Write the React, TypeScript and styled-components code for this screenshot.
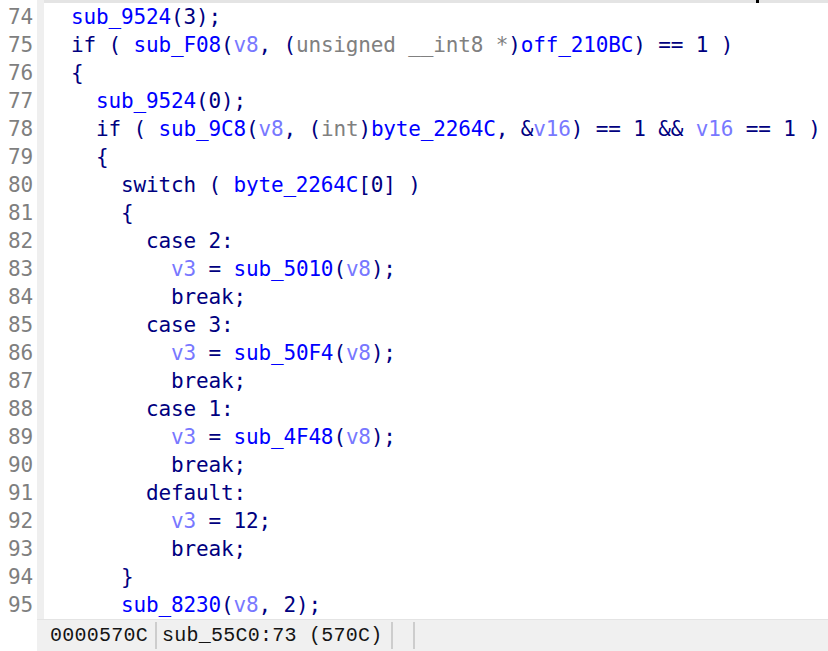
import React from "react";
import styled, { createGlobalStyle } from "styled-components";

const Global = createGlobalStyle`
  html, body { margin: 0; padding: 0; background: #ffffff; }
  body { width: 828px; height: 651px; overflow: hidden; }
`;

type Kind = "p" | "f" | "v" | "t";
type Tok = [Kind, string];

const Page = styled.div`
  width: 828px;
  height: 651px;
  display: flex;
  flex-direction: column;
  background: #ffffff;
  overflow: hidden;
`;

const Editor = styled.div`
  flex: 1;
  display: flex;
  min-height: 0;
`;

const Gutter = styled.div`
  width: 37px;
  padding-top: 3px;
  display: flex;
  flex-direction: column;
  align-items: flex-end;
  box-sizing: border-box;
  padding-right: 4px;
`;

const LineNo = styled.div`
  height: 28px;
  line-height: 28px;
  font-family: "DejaVu Sans Mono", monospace;
  font-size: 21px;
  letter-spacing: -0.15px;
  color: #7f7f7f;
`;

const Strip = styled.div`
  width: 7px;
  background: #efefef;
`;

const CodePane = styled.div`
  flex: 1;
  display: flex;
  flex-direction: column;
  padding-left: 2px;
  position: relative;
`;

const TopBar = styled.div`
  height: 3px;
  margin-left: -2px;
  background: #e4e4e4;
  position: relative;
`;

const Thumb = styled.div`
  position: absolute;
  left: 712px;
  top: 0;
  width: 3px;
  height: 3px;
  background: #000000;
`;

const CodeLine = styled.div`
  height: 28px;
  line-height: 28px;
  font-family: "DejaVu Sans Mono", monospace;
  font-size: 21px;
  letter-spacing: -0.15px;
  white-space: pre;
  color: #000080;
`;

const colors: Record<Kind, string> = {
  p: "#000080",
  f: "#0000ff",
  v: "#7878ff",
  t: "#808080",
};

const Token = styled.span<{ $kind: Kind }>`
  color: ${(p) => colors[p.$kind]};
`;

const StatusBar = styled.div`
  height: 32px;
  margin-left: 37px;
  background: #f0f0f0;
  border-top: 1px solid #e4e4e4;
  box-sizing: border-box;
  display: flex;
  align-items: stretch;
`;

const Cell = styled.div<{ $w: number; $pad: number }>`
  width: ${(p) => p.$w}px;
  padding-left: ${(p) => p.$pad}px;
  box-sizing: border-box;
  margin: 2px 0 2px;
  border-right: 2px solid #cdcdcd;
  display: flex;
  align-items: center;
  font-family: "Liberation Mono", "Courier New", monospace;
  font-size: 20px;
  letter-spacing: 0.25px;
  color: #141414;
  white-space: pre;
`;

const lines: { n: number; t: Tok[] }[] = [
  { n: 74, t: [["p", "  "], ["f", "sub_9524"], ["p", "(3);"]] },
  {
    n: 75,
    t: [
      ["p", "  if ( "],
      ["f", "sub_F08"],
      ["p", "("],
      ["v", "v8"],
      ["p", ", ("],
      ["t", "unsigned __int8 *"],
      ["p", ")"],
      ["f", "off_210BC"],
      ["p", ") == 1 )"],
    ],
  },
  { n: 76, t: [["p", "  {"]] },
  { n: 77, t: [["p", "    "], ["f", "sub_9524"], ["p", "(0);"]] },
  {
    n: 78,
    t: [
      ["p", "    if ( "],
      ["f", "sub_9C8"],
      ["p", "("],
      ["v", "v8"],
      ["p", ", ("],
      ["t", "int"],
      ["p", ")"],
      ["f", "byte_2264C"],
      ["p", ", &"],
      ["v", "v16"],
      ["p", ") == 1 && "],
      ["v", "v16"],
      ["p", " == 1 )"],
    ],
  },
  { n: 79, t: [["p", "    {"]] },
  { n: 80, t: [["p", "      switch ( "], ["f", "byte_2264C"], ["p", "[0] )"]] },
  { n: 81, t: [["p", "      {"]] },
  { n: 82, t: [["p", "        case 2:"]] },
  { n: 83, t: [["p", "          "], ["v", "v3"], ["p", " = "], ["f", "sub_5010"], ["p", "("], ["v", "v8"], ["p", ");"]] },
  { n: 84, t: [["p", "          break;"]] },
  { n: 85, t: [["p", "        case 3:"]] },
  { n: 86, t: [["p", "          "], ["v", "v3"], ["p", " = "], ["f", "sub_50F4"], ["p", "("], ["v", "v8"], ["p", ");"]] },
  { n: 87, t: [["p", "          break;"]] },
  { n: 88, t: [["p", "        case 1:"]] },
  { n: 89, t: [["p", "          "], ["v", "v3"], ["p", " = "], ["f", "sub_4F48"], ["p", "("], ["v", "v8"], ["p", ");"]] },
  { n: 90, t: [["p", "          break;"]] },
  { n: 91, t: [["p", "        default:"]] },
  { n: 92, t: [["p", "          "], ["v", "v3"], ["p", " = 12;"]] },
  { n: 93, t: [["p", "          break;"]] },
  { n: 94, t: [["p", "      }"]] },
  { n: 95, t: [["p", "      "], ["f", "sub_8230"], ["p", "("], ["v", "v8"], ["p", ", 2);"]] },
];

export default function App() {
  return (
    <Page>
      <Global />
      <Editor>
        <Gutter>
          {lines.map((l) => (
            <LineNo key={l.n}>{l.n}</LineNo>
          ))}
        </Gutter>
        <Strip />
        <CodePane>
          <TopBar>
            <Thumb />
          </TopBar>
          {lines.map((l) => (
            <CodeLine key={l.n}>
              {l.t.map(([k, s], i) => (
                <Token key={i} $kind={k}>
                  {s}
                </Token>
              ))}
            </CodeLine>
          ))}
        </CodePane>
      </Editor>
      <StatusBar>
        <Cell $w={120} $pad={13}>0000570C</Cell>
        <Cell $w={236} $pad={5}>sub_55C0:73 (570C)</Cell>
        <Cell $w={22} $pad={0}></Cell>
      </StatusBar>
    </Page>
  );
}
